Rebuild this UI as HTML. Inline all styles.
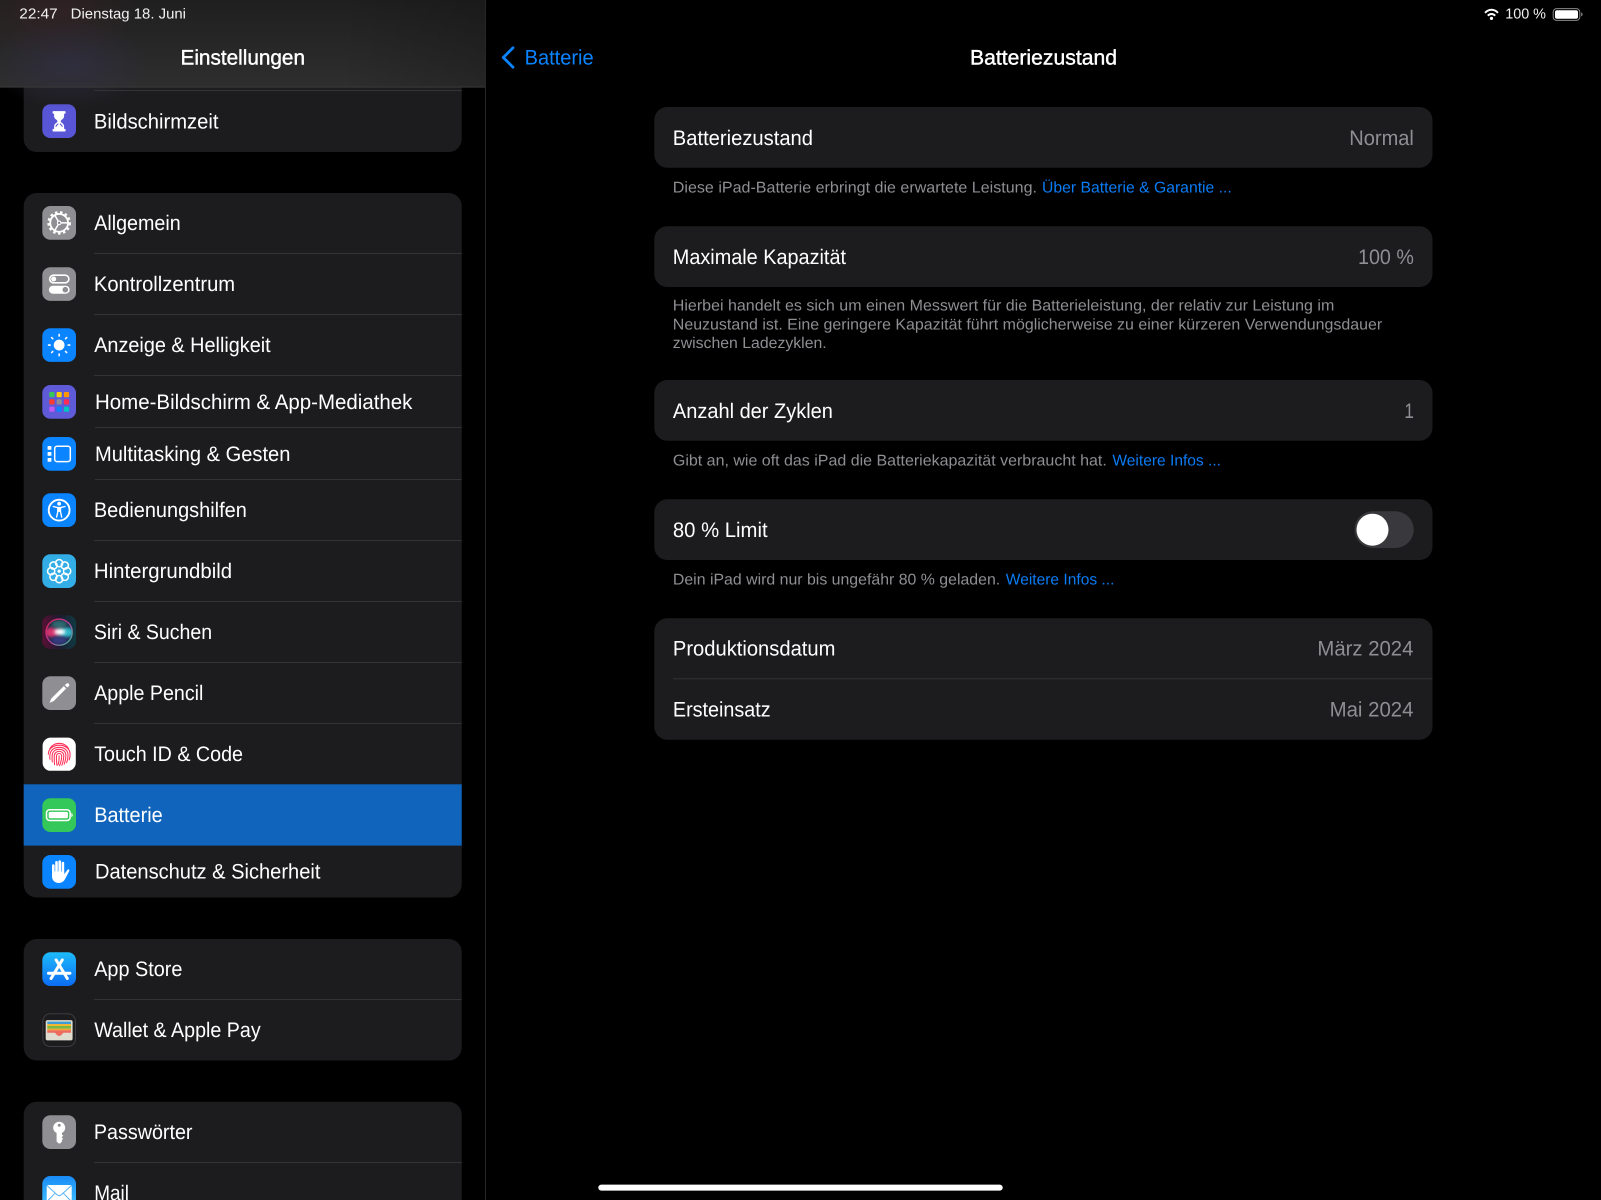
<!DOCTYPE html>
<html lang="de">
<head>
<meta charset="utf-8">
<title>Batteriezustand</title>
<style>
html,body{margin:0;padding:0;background:#000;width:1601px;height:1200px;overflow:hidden}
svg{display:block;position:absolute;left:0;top:0}
text{font-family:"Liberation Sans",sans-serif;text-rendering:geometricPrecision}
.r{font-size:21px;fill:#fff}
.v{font-size:21px;fill:#8e8e93}
.f{font-size:15.6px;fill:#8e8e93}
.l{font-size:15.6px;fill:#0a7cf5}
.s{font-size:14.5px;fill:#f2f2f2}
.h{font-size:21px;fill:#fff;stroke:#fff;stroke-width:.4}
.sep{fill:#333335}
.card{fill:#1c1c1e}
</style>
</head>
<body>
<svg width="1601" height="1200" viewBox="0 0 1601 1200" xmlns="http://www.w3.org/2000/svg">
<defs>
<linearGradient id="hdr" x1="0" y1="0" x2="0" y2="1"><stop offset="0" stop-color="#1f1f1f"/><stop offset="1" stop-color="#2e2e2e"/></linearGradient>
<linearGradient id="hdrR" x1="0" y1="0" x2="1" y2="0"><stop offset=".7" stop-color="#000" stop-opacity="0"/><stop offset="1" stop-color="#000" stop-opacity=".18"/></linearGradient>
<radialGradient id="hdrA" cx=".5" cy=".5" r=".5"><stop offset="0" stop-color="#3a2226" stop-opacity=".6"/><stop offset="1" stop-color="#3a2226" stop-opacity="0"/></radialGradient>
<radialGradient id="hdrB" cx=".5" cy=".5" r=".5"><stop offset="0" stop-color="#33304a" stop-opacity=".6"/><stop offset="1" stop-color="#33304a" stop-opacity="0"/></radialGradient>
<linearGradient id="asg" x1="0" y1="0" x2="0" y2="1"><stop offset="0" stop-color="#1ebbfb"/><stop offset="1" stop-color="#0b6cf2"/></linearGradient>
<linearGradient id="mlg" x1="0" y1="0" x2="0" y2="1"><stop offset="0" stop-color="#1a8cf8"/><stop offset="1" stop-color="#42c8fb"/></linearGradient>
<linearGradient id="sirb" x1="0" y1="0" x2="1" y2="0"><stop offset="0" stop-color="#5a1034"/><stop offset=".5" stop-color="#1d1a30"/><stop offset="1" stop-color="#0f3a42"/></linearGradient>
<linearGradient id="sirr" x1="0" y1="0" x2="1" y2="1"><stop offset="0" stop-color="#e0204f"/><stop offset=".5" stop-color="#b83fa0"/><stop offset="1" stop-color="#30c8a0"/></linearGradient>
<filter id="blur1" x="-50%" y="-50%" width="200%" height="200%"><feGaussianBlur stdDeviation="1.6"/></filter>
<clipPath id="sideclip"><rect x="0" y="87" width="485" height="1113"/></clipPath>
<clipPath id="sirclip"><circle cx="16.85" cy="16.85" r="13"/></clipPath>
</defs>

<rect width="1601" height="1200" fill="#000"/>

<!-- sidebar cards -->
<g clip-path="url(#sideclip)">
<rect class="card" x="23.7" y="60" width="438" height="92" rx="13"/>
<rect class="card" x="23.7" y="193" width="438" height="704.5" rx="13"/>
<rect class="card" x="23.7" y="939" width="438" height="121.5" rx="13"/>
<rect class="card" x="23.7" y="1101.7" width="438" height="140" rx="13"/>
<rect x="23.7" y="784.3" width="438" height="61.3" fill="#1064bc"/>
<rect class="sep" x="94" y="90" width="367.7" height="1"/>
<rect class="sep" x="94" y="253" width="367.7" height="1"/>
<rect class="sep" x="94" y="314" width="367.7" height="1"/>
<rect class="sep" x="94" y="375" width="367.7" height="1"/>
<rect class="sep" x="95" y="427" width="366.7" height="1"/>
<rect class="sep" x="95" y="479" width="366.7" height="1"/>
<rect class="sep" x="94" y="540" width="367.7" height="1"/>
<rect class="sep" x="94" y="601" width="367.7" height="1"/>
<rect class="sep" x="94" y="662" width="367.7" height="1"/>
<rect class="sep" x="94" y="723" width="367.7" height="1"/>
<rect class="sep" x="94" y="999" width="367.7" height="1"/>
<rect class="sep" x="94" y="1162" width="367.7" height="1"/>

<!-- sidebar labels -->
<text class="r" x="93.9" y="128.3" textLength="124.6" lengthAdjust="spacingAndGlyphs">Bildschirmzeit</text>
<text class="r" x="94.2" y="230.2" textLength="86.5" lengthAdjust="spacingAndGlyphs">Allgemein</text>
<text class="r" x="93.9" y="291.2" textLength="141.2" lengthAdjust="spacingAndGlyphs">Kontrollzentrum</text>
<text class="r" x="94.2" y="352.2" textLength="176.5" lengthAdjust="spacingAndGlyphs">Anzeige &amp; Helligkeit</text>
<text class="r" x="95" y="408.8" textLength="317.4" lengthAdjust="spacingAndGlyphs">Home-Bildschirm &amp; App-Mediathek</text>
<text class="r" x="95" y="460.8" textLength="195.4" lengthAdjust="spacingAndGlyphs">Multitasking &amp; Gesten</text>
<text class="r" x="93.9" y="517.2" textLength="152.9" lengthAdjust="spacingAndGlyphs">Bedienungshilfen</text>
<text class="r" x="93.9" y="578.2" textLength="138.2" lengthAdjust="spacingAndGlyphs">Hintergrundbild</text>
<text class="r" x="93.9" y="639.2" textLength="118.2" lengthAdjust="spacingAndGlyphs">Siri &amp; Suchen</text>
<text class="r" x="94.2" y="700.2" textLength="109.2" lengthAdjust="spacingAndGlyphs">Apple Pencil</text>
<text class="r" x="94.2" y="761.2" textLength="148.8" lengthAdjust="spacingAndGlyphs">Touch ID &amp; Code</text>
<text class="r" x="94.2" y="822.2" textLength="68.5" lengthAdjust="spacingAndGlyphs">Batterie</text>
<text class="r" x="95" y="878.6" textLength="225.4" lengthAdjust="spacingAndGlyphs">Datenschutz &amp; Sicherheit</text>
<text class="r" x="94.2" y="976.2" textLength="88.2" lengthAdjust="spacingAndGlyphs">App Store</text>
<text class="r" x="94.2" y="1037.2" textLength="166.5" lengthAdjust="spacingAndGlyphs">Wallet &amp; Apple Pay</text>
<text class="r" x="93.9" y="1139.2" textLength="98.6" lengthAdjust="spacingAndGlyphs">Passwörter</text>
<text class="r" x="94.2" y="1200.2" textLength="34.8" lengthAdjust="spacingAndGlyphs">Mail</text>

<!-- Bildschirmzeit -->
<g transform="translate(42.3 104.3)">
<rect width="33.7" height="33.7" rx="8" fill="#5856d6"/>
<rect x="10.3" y="6.8" width="13" height="2.6" rx=".8" fill="#fff"/>
<rect x="10.3" y="24.6" width="13" height="2.6" rx=".8" fill="#fff"/>
<path d="M11.8 9.2H21.8V12C21.8 14.8 18.4 15.6 18.4 17C18.4 18.4 21.8 19.2 21.8 22V24.8H11.8V22C11.8 19.2 15.2 18.4 15.2 17C15.2 15.6 11.8 14.8 11.8 12Z" fill="#fff"/>
<path d="M13.2 21.8C13.6 20.6 15 19.6 16 18.8V20.2C15.2 20.8 14.4 21.6 14 22.6H13.2Z M20.4 21.8C20 20.6 18.6 19.6 17.6 18.8V20.2C18.4 20.8 19.2 21.6 19.6 22.6H20.4Z" fill="#5856d6"/>
</g>

<!-- Allgemein -->
<g transform="translate(42.3 206)">
<rect width="33.7" height="33.7" rx="8" fill="#8e8e93"/>
<g fill="none" stroke="#fff" transform="translate(16.85 16.85)">
<circle r="10.5" stroke-width="2.6" stroke-dasharray="2.5 2.5"/>
<circle r="8.9" stroke-width="1.8"/>
<circle r="1.8" stroke-width="1.1"/>
<path d="M1.8 0H8.4M-.9 -1.6L-4.2 -7.3M-.9 1.6L-4.2 7.3" stroke-width="1.5"/>
</g>
</g>

<!-- Kontrollzentrum -->
<g transform="translate(42.3 267.2)">
<rect width="33.7" height="33.7" rx="8" fill="#8e8e93"/>
<rect x="7.4" y="8" width="19.2" height="7.6" rx="3.8" fill="none" stroke="#fff" stroke-width="1.6"/>
<circle cx="11.4" cy="11.8" r="2.5" fill="#fff"/>
<rect x="6.6" y="18.5" width="20.8" height="8" rx="4" fill="#fff"/>
<circle cx="23" cy="22.5" r="2.8" fill="#8e8e93"/>
</g>

<!-- Anzeige -->
<g transform="translate(42.3 328.2)">
<rect width="33.7" height="33.7" rx="8" fill="#0a84ff"/>
<circle cx="16.85" cy="16.85" r="5.4" fill="#fff"/>
<g stroke="#fff" stroke-width="1.6" stroke-linecap="round" transform="translate(16.85 16.85)">
<path d="M0-9V-10.6M0 9V10.6M-9 0H-10.6M9 0H10.6M-6.4-6.4L-7.5-7.5M6.4-6.4L7.5-7.5M-6.4 6.4L-7.5 7.5M6.4 6.4L7.5 7.5"/>
</g>
</g>

<!-- Home -->
<g transform="translate(42.3 385)">
<rect width="33.7" height="33.7" rx="8" fill="#5e5ad8"/>
<rect x="7" y="7" width="5.2" height="5.2" rx="1.1" fill="#34c759"/>
<rect x="14.3" y="7" width="5.2" height="5.2" rx="1.1" fill="#ffcc00"/>
<rect x="21.6" y="7" width="5.2" height="5.2" rx="1.1" fill="#ff9500"/>
<rect x="7" y="14.3" width="5.2" height="5.2" rx="1.1" fill="#ff3b30"/>
<rect x="14.3" y="14.3" width="5.2" height="5.2" rx="1.1" fill="#8e8e93"/>
<rect x="21.6" y="14.3" width="5.2" height="5.2" rx="1.1" fill="#ff2d55"/>
<rect x="7" y="21.6" width="5.2" height="5.2" rx="1.1" fill="#bf5af2"/>
<rect x="14.3" y="21.6" width="5.2" height="5.2" rx="1.1" fill="#0a84ff"/>
<rect x="21.6" y="21.6" width="5.2" height="5.2" rx="1.1" fill="#00c7be"/>
</g>

<!-- Multitasking -->
<g transform="translate(42.3 437)">
<rect width="33.7" height="33.7" rx="8" fill="#0a84ff"/>
<rect x="5.3" y="9" width="3.8" height="3.8" rx=".6" fill="#fff"/>
<rect x="5.3" y="15" width="3.8" height="3.8" rx=".6" fill="#fff"/>
<rect x="5.3" y="21" width="3.8" height="3.8" rx=".6" fill="#fff"/>
<rect x="12.4" y="9.2" width="15.6" height="15.4" rx="2.4" fill="none" stroke="#fff" stroke-width="1.5"/>
</g>

<!-- Bedienungshilfen -->
<g transform="translate(42.3 493.3)">
<rect width="33.7" height="33.7" rx="8" fill="#0a84ff"/>
<circle cx="16.85" cy="16.85" r="10.4" fill="none" stroke="#fff" stroke-width="1.9"/>
<circle cx="16.85" cy="10.4" r="1.9" fill="#fff"/>
<path d="M11 13.2L15.2 14.3H18.5L22.7 13.2" fill="none" stroke="#fff" stroke-width="1.4" stroke-linecap="round" stroke-linejoin="round"/>
<path d="M15.5 14.4H18.2V18.6L19.4 23.8M15.5 14.4V18.6L14.3 23.8" fill="none" stroke="#fff" stroke-width="1.4" stroke-linecap="round" stroke-linejoin="round"/>
<rect x="15.5" y="14.4" width="2.7" height="4.2" fill="#fff"/>
</g>

<!-- Hintergrundbild -->
<g transform="translate(42.3 554.3)">
<rect width="33.7" height="33.7" rx="8" fill="#32ade6"/>
<g transform="translate(16.85 16.85)" fill="none" stroke="#fff" stroke-width="1.5">
<circle cy="-8" r="3.6"/><circle cy="8" r="3.6"/><circle cx="-8" r="3.6"/><circle cx="8" r="3.6"/>
<circle cx="-5.66" cy="-5.66" r="3.6"/><circle cx="5.66" cy="-5.66" r="3.6"/><circle cx="-5.66" cy="5.66" r="3.6"/><circle cx="5.66" cy="5.66" r="3.6"/>
<circle r="1.7" fill="#fff" stroke="none"/>
</g>
</g>

<!-- Siri -->
<g transform="translate(42.3 615.3)">
<rect width="33.7" height="33.7" rx="8" fill="url(#sirb)"/>
<circle cx="16.85" cy="16.85" r="13" fill="#1c2440"/>
<g clip-path="url(#sirclip)">
<ellipse cx="9.5" cy="17" rx="7" ry="5" fill="#d8326e" filter="url(#blur1)"/>
<ellipse cx="24.5" cy="17" rx="7" ry="5" fill="#2fb6c8" filter="url(#blur1)"/>
<ellipse cx="17" cy="9" rx="8" ry="4" fill="#2e6a70" filter="url(#blur1)"/>
<ellipse cx="17" cy="25" rx="8" ry="4" fill="#353a80" filter="url(#blur1)"/>
<ellipse cx="17.5" cy="16.5" rx="5.5" ry="3.2" fill="#fff" filter="url(#blur1)"/>
</g>
<circle cx="16.85" cy="16.85" r="13.1" fill="none" stroke="url(#sirr)" stroke-width="1.3"/>
</g>

<!-- Pencil -->
<g transform="translate(42.3 676.3)">
<rect width="33.7" height="33.7" rx="8" fill="#8e8e93"/>
<path d="M7.2 26.6L9 22.2L21.5 9.8L23.9 12.2L11.5 24.7Z" fill="#fff"/>
<path d="M22.5 8.8L24 7.4C24.8 6.7 25.8 6.8 26.5 7.5C27.2 8.2 27.2 9.2 26.5 9.9L25 11.2Z" fill="#fff"/>
</g>

<!-- Touch ID -->
<g transform="translate(42.3 737.3)">
<rect x=".3" y=".3" width="33.2" height="33.2" rx="8" fill="#fff"/>
<g fill="none" stroke="#ff2d55" stroke-width="1.05" stroke-linecap="round">
<path d="M7.5 11.5C9.6 7.7 13 6 16.9 6C20.8 6 24.2 7.7 26.3 11.5"/>
<path d="M6 17C6 11.5 10.7 7.9 16.9 7.9C23.1 7.9 27.8 11.5 27.8 17C27.8 19 27.5 21 26.9 22.6"/>
<path d="M7.7 22C7.3 20.6 7.5 18.6 7.7 17C8.3 12.7 12 10 16.9 10C21.8 10 25.7 12.8 25.7 17.5C25.7 20.2 25.3 23 24.3 25.4"/>
<path d="M10 24.6C9.6 22.4 9.8 20 9.9 17.8C10.1 14.2 13.1 12 16.9 12C20.7 12 23.6 14.4 23.6 18C23.6 21 23 24 21.9 26.9"/>
<path d="M12.3 27.3C11.9 24.4 11.9 21 12 18.4C12.1 15.7 14.2 14.1 16.9 14.1C19.6 14.1 21.5 16 21.5 18.6C21.5 21.8 20.7 25 19.5 28"/>
<path d="M14.8 28.2C14.2 25 14 21.4 14.2 18.8C14.3 17.2 15.4 16.2 16.9 16.2C18.4 16.2 19.4 17.4 19.4 19C19.4 22 18.7 25 17.2 28.3"/>
<path d="M16.8 18.6C16.9 21.6 16.6 24.8 15.9 27"/>
</g>
</g>

<!-- Batterie -->
<g transform="translate(42.3 798.3)">
<rect width="33.7" height="33.7" rx="8" fill="#34c759"/>
<rect x="4.2" y="11.4" width="23.6" height="10.8" rx="3.2" fill="none" stroke="#fff" stroke-width="1.5"/>
<rect x="6.4" y="13.6" width="19.2" height="6.4" rx="1.4" fill="#fff"/>
<path d="M29 14.8C30 15.2 30.4 16 30.4 16.8C30.4 17.6 30 18.4 29 18.8Z" fill="#fff"/>
</g>

<!-- Datenschutz -->
<g transform="translate(42.3 855)">
<rect width="33.7" height="33.7" rx="8" fill="#0a84ff"/>
<g stroke="#fff" stroke-width="2.6" stroke-linecap="round" fill="none">
<path d="M11 10.5V18.5M14.2 7.3V17.5M17.4 6.6V17.5M20.6 8V18"/>
</g>
<path d="M9.7 16.5H21.9V19.3L25.3 14.6C26.4 14 27.6 15 26.8 16.2L23.2 23.3C21.9 26.2 19.5 28 16.6 28C12.4 28 9.7 25 9.7 21.5Z" fill="#fff"/>
</g>

<!-- App Store -->
<g transform="translate(42.3 952.3)">
<rect width="33.7" height="33.7" rx="8" fill="url(#asg)"/>
<g stroke="#fff" stroke-width="3" stroke-linecap="round" fill="none">
<path d="M8.8 26.2L20 7.6"/>
<path d="M13.8 7.6L25 26.2"/>
<path d="M6.2 21H27.6"/>
</g>
</g>

<!-- Wallet -->
<g transform="translate(42.3 1013.3)">
<rect x=".5" y=".5" width="32.7" height="32.7" rx="7.6" fill="#1c1c1e" stroke="#3d3d40"/>
<rect x="3.4" y="6.8" width="26.9" height="20.3" rx="1.8" fill="#dfdbcf"/>
<path d="M5 8.3H28.7V10.7H5Z" fill="#3d9bd6"/>
<rect x="5" y="10.7" width="23.7" height="2" fill="#f2b632"/>
<rect x="5" y="12.7" width="23.7" height="2.6" fill="#79b842"/>
<rect x="5" y="15.3" width="23.7" height="1.7" fill="#f2a933"/>
<path d="M5 17H28.7V19.4H21.8C20.4 19.4 20 20.8 18.8 21.9C17.6 22.8 16.1 22.8 14.9 21.9C13.7 20.8 13.3 19.4 11.9 19.4H5Z" fill="#ee6a5c"/>
</g>

<!-- Passwoerter -->
<g transform="translate(42.3 1115.3)">
<rect width="33.7" height="33.7" rx="8" fill="#8e8e93"/>
<path d="M10.9 12.5C10.9 9.2 13.6 6.5 16.9 6.5C20.2 6.5 22.9 9.2 22.9 12.5C22.9 14.8 21.6 16.7 19.6 17.6V19.2L21 20.4L19.6 21.7V22.4L20.8 23.6L19.6 24.8V26.4L17.8 28.2H16.4L14.3 26.2V17.6C12.2 16.7 10.9 14.8 10.9 12.5Z" fill="#fff"/>
<circle cx="16.9" cy="10" r="1.5" fill="#8e8e93"/>
</g>

<!-- Mail -->
<g transform="translate(42.3 1176)">
<rect width="33.7" height="33.7" rx="8" fill="url(#mlg)"/>
<rect x="4.4" y="9" width="25" height="17" rx="1.6" fill="#fff"/>
<path d="M4.8 9.6L14.6 18.6C16 19.9 17.8 19.9 19.2 18.6L29 9.6M4.8 25.4L12.8 17.2M29 25.4L21 17.2" fill="none" stroke="#5ab4f7" stroke-width="1"/>
</g>
</g>

<!-- header -->
<rect x="0" y="0" width="485" height="87" fill="url(#hdr)"/>
<rect x="0" y="0" width="485" height="87" fill="url(#hdrR)"/>
<ellipse cx="55" cy="10" rx="85" ry="50" fill="url(#hdrA)"/>
<ellipse cx="70" cy="65" rx="80" ry="45" fill="url(#hdrB)"/>
<rect x="0" y="86.6" width="485" height="1" fill="#3a3a3a"/>
<rect x="485" y="0" width="1" height="1200" fill="#262626"/>

<text class="s" x="19.3" y="18.7" textLength="38.4" lengthAdjust="spacingAndGlyphs">22:47</text>
<text class="s" x="70.7" y="18.7" textLength="115.3" lengthAdjust="spacingAndGlyphs">Dienstag 18. Juni</text>
<text class="h" x="180.5" y="64.3" textLength="124.5" lengthAdjust="spacingAndGlyphs">Einstellungen</text>

<!-- nav -->
<path d="M513 47.8L503.3 57.5L513 67.2" fill="none" stroke="#0a84ff" stroke-width="2.8" stroke-linecap="round" stroke-linejoin="round"/>
<text x="524.6" y="64.4" style="font-size:21px;fill:#0a84ff" textLength="69" lengthAdjust="spacingAndGlyphs">Batterie</text>
<text class="h" x="970" y="64.3" textLength="147" lengthAdjust="spacingAndGlyphs">Batteriezustand</text>

<!-- status -->
<g transform="translate(1484 8.2)" fill="none" stroke="#fff" stroke-width="2">
<path d="M1 4.6C5 .6 10 .6 14 4.6"/>
<path d="M3.8 7.5C6 5.3 9 5.3 11.2 7.5"/>
<circle cx="7.5" cy="10.2" r="1.6" fill="#fff" stroke="none"/>
</g>
<text class="s" x="1505.2" y="18.7" textLength="40.8" lengthAdjust="spacingAndGlyphs">100 %</text>
<rect x="1553.2" y="8.6" width="26.6" height="11.8" rx="3.4" fill="none" stroke="#8a8a8a" stroke-width="1"/>
<rect x="1555" y="10.2" width="23" height="8.6" rx="2" fill="#fff"/>
<path d="M1581.2 12.4C1582.2 12.8 1582.6 13.6 1582.6 14.4C1582.6 15.2 1582.2 16 1581.2 16.4Z" fill="#8a8a8a"/>

<!-- detail cards -->
<rect class="card" x="654.3" y="107" width="778.2" height="60.7" rx="13"/>
<text class="r" x="672.8" y="144.8" textLength="140.2" lengthAdjust="spacingAndGlyphs">Batteriezustand</text>
<text class="v" x="1349.3" y="144.8" textLength="64.6" lengthAdjust="spacingAndGlyphs">Normal</text>
<text class="f" x="672.8" y="192.4" textLength="364.2" lengthAdjust="spacingAndGlyphs">Diese iPad-Batterie erbringt die erwartete Leistung.</text>
<text class="l" x="1042" y="192.4" textLength="189.8" lengthAdjust="spacingAndGlyphs">Über Batterie &amp; Garantie ...</text>

<rect class="card" x="654.3" y="226.3" width="778.2" height="60.7" rx="13"/>
<text class="r" x="672.8" y="263.8" textLength="173.2" lengthAdjust="spacingAndGlyphs">Maximale Kapazität</text>
<text class="v" x="1358" y="263.8" textLength="55.9" lengthAdjust="spacingAndGlyphs">100 %</text>
<text class="f" x="672.8" y="310.6" textLength="661.5" lengthAdjust="spacingAndGlyphs">Hierbei handelt es sich um einen Messwert für die Batterieleistung, der relativ zur Leistung im</text>
<text class="f" x="672.8" y="329.4" textLength="709.4" lengthAdjust="spacingAndGlyphs">Neuzustand ist. Eine geringere Kapazität führt möglicherweise zu einer kürzeren Verwendungsdauer</text>
<text class="f" x="672.8" y="348.2" textLength="153.9" lengthAdjust="spacingAndGlyphs">zwischen Ladezyklen.</text>

<rect class="card" x="654.3" y="380" width="778.2" height="60.7" rx="13"/>
<text class="r" x="672.9" y="417.8" textLength="160" lengthAdjust="spacingAndGlyphs">Anzahl der Zyklen</text>
<text class="v" x="1404.4" y="417.8" textLength="9.5" lengthAdjust="spacingAndGlyphs">1</text>
<text class="f" x="672.9" y="465.3" textLength="433.9" lengthAdjust="spacingAndGlyphs">Gibt an, wie oft das iPad die Batteriekapazität verbraucht hat.</text>
<text class="l" x="1112.4" y="465.3" textLength="108.6" lengthAdjust="spacingAndGlyphs">Weitere Infos ...</text>

<rect class="card" x="654.3" y="499.3" width="778.2" height="60.7" rx="13"/>
<text class="r" x="672.9" y="536.8" textLength="94.7" lengthAdjust="spacingAndGlyphs">80 % Limit</text>
<rect x="1354.5" y="511.3" width="59.2" height="36.7" rx="18.35" fill="#39393d"/>
<circle cx="1372.5" cy="529.7" r="16" fill="#fff"/>
<text class="f" x="672.9" y="584.3" textLength="327.3" lengthAdjust="spacingAndGlyphs">Dein iPad wird nur bis ungefähr 80 % geladen.</text>
<text class="l" x="1005.8" y="584.3" textLength="108.6" lengthAdjust="spacingAndGlyphs">Weitere Infos ...</text>

<rect class="card" x="654.3" y="618.3" width="778.2" height="121.4" rx="13"/>
<text class="r" x="672.9" y="655.6" textLength="162.5" lengthAdjust="spacingAndGlyphs">Produktionsdatum</text>
<text class="v" x="1317.4" y="655.6" textLength="96" lengthAdjust="spacingAndGlyphs">März 2024</text>
<rect class="sep" x="673" y="678.3" width="759.5" height="1"/>
<text class="r" x="672.9" y="716.6" textLength="97.7" lengthAdjust="spacingAndGlyphs">Ersteinsatz</text>
<text class="v" x="1329.6" y="716.6" textLength="83.9" lengthAdjust="spacingAndGlyphs">Mai 2024</text>

<!-- home indicator -->
<rect x="598.3" y="1184.6" width="404.4" height="6" rx="3" fill="#fff"/>
</svg>
</body>
</html>
